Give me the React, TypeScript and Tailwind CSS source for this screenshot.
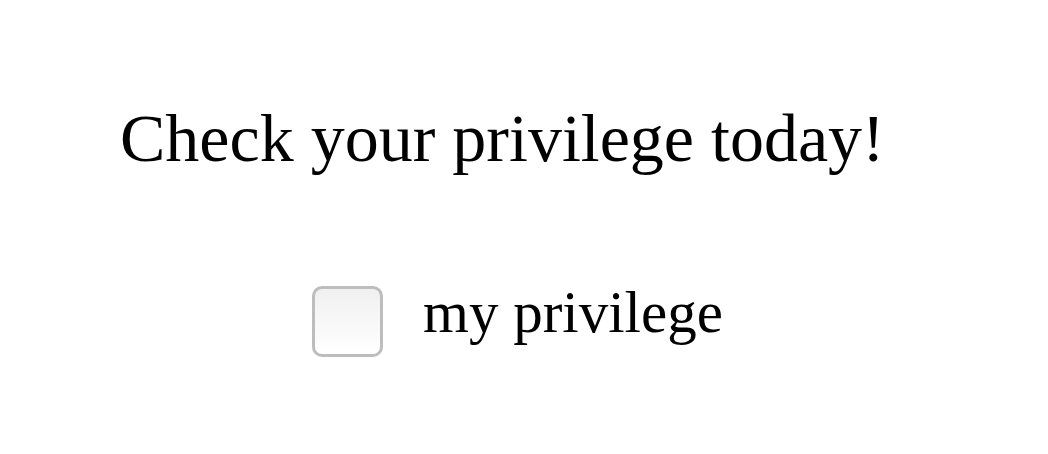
import React from "react";

export default function App() {
  return (
    <div className="w-[1048px] h-[454px] bg-white text-black" style={{ fontFamily: '"Liberation Serif", serif' }}>
      <div className="pt-[98px] pl-[120px]">
        <h1 className="text-[68px] leading-[80px] whitespace-nowrap">Check your privilege today!</h1>
      </div>
      <div className="flex items-center pl-[312px] pt-[108px] gap-[40px]">
        <div className="w-[71px] h-[71px] rounded-[10px] border-[3px] border-[#bdbdbd] bg-gradient-to-b from-[#f0f0f0] to-white" />
        <span className="text-[59px] leading-[64px] -mt-[20px]">my privilege</span>
      </div>
    </div>
  );
}
